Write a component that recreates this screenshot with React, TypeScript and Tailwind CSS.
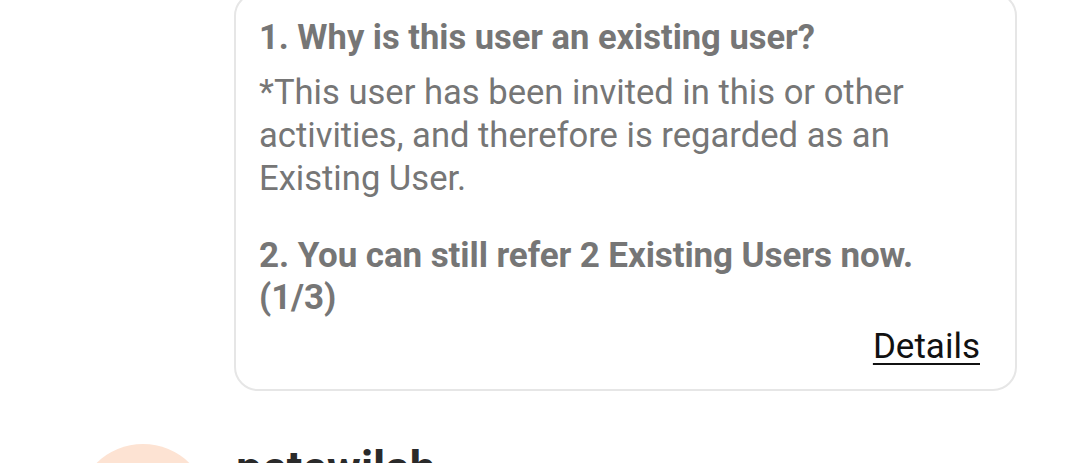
import React from 'react';

const font = { fontFamily: 'Roboto, "Noto Sans", sans-serif' };

export default function App() {
  return (
    <div className="w-[1080px] h-[463px] overflow-hidden bg-white" style={font}>
      <div className="ml-[234px] mt-[-8px] w-[783px] rounded-[24px] border-2 border-[#e6e6e6] pl-[23px] pr-[35px] pt-[22px] pb-[21px] text-[#767676]">
        <p className="text-[34.5px] leading-[43px] font-bold">1. Why is this user an existing user?</p>
        <p className="mt-[12px] text-[34.6px] leading-[43px]">
          *This user has been invited in this or other activities, and therefore is regarded as an Existing User.
        </p>
        <p className="mt-[35px] text-[35px] leading-[42px] font-bold tracking-[-0.1px]">
          2. You can still refer 2 Existing Users now. (1/3)
        </p>
        <div className="mt-[6px] flex justify-end">
          <a className="text-[35px] leading-[43px] text-[#111] underline underline-offset-[5px] decoration-2">Details</a>
        </div>
      </div>
      <div className="mt-[53px] flex items-start">
        <div className="ml-[77px] h-[132px] w-[132px] shrink-0 rounded-full bg-[#fde3d3]" />
        <p className="ml-[27px] text-[46px] leading-[48px] font-bold text-[#2a2a2a]">petewilah</p>
      </div>
    </div>
  );
}
